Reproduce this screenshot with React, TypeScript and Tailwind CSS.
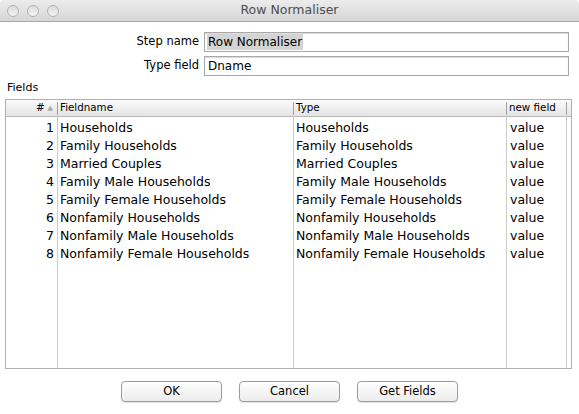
import React from "react";

const rows = [
  "Households",
  "Family Households",
  "Married Couples",
  "Family Male Households",
  "Family Female Households",
  "Nonfamily Households",
  "Nonfamily Male Households",
  "Nonfamily Female Households",
];

const TrafficLight = () => (
  <span className="w-[12px] h-[12px] rounded-full border border-[#b0b0b0] bg-gradient-to-b from-[#dcdcdc] to-[#f4f4f4]" />
);

const Button = ({ label }: { label: string }) => (
  <button className="w-[101px] h-[21px] rounded-[4px] border border-[#9c9c9c] bg-gradient-to-b from-white to-[#ececec] text-[11.5px] leading-none text-black shadow-[0_1px_1px_rgba(0,0,0,0.12)]">
    {label}
  </button>
);

export default function App() {
  return (
    <div className="w-[579px] h-[414px] bg-white overflow-hidden flex flex-col font-['DejaVu_Sans',sans-serif] text-black">
      {/* title bar */}
      <div className="relative h-[22px] shrink-0 flex items-center border-b border-[#a9a9a9] bg-gradient-to-b from-[#ececec] to-[#d6d6d6] rounded-t-[4px]">
        <div className="flex gap-[8px] pl-[7px]">
          <TrafficLight />
          <TrafficLight />
          <TrafficLight />
        </div>
        <div className="absolute inset-0 flex items-center justify-center text-[12.5px] text-[#4d4d4d]">
          Row Normaliser
        </div>
      </div>

      {/* form */}
      <div className="mt-[10px] flex flex-col gap-[4px]">
        <div className="flex items-center h-[20px]">
          <div className="w-[199px] text-right text-[11.5px]">Step name</div>
          <div className="ml-[5px] w-[365px] h-[20px] border border-[#a8a8a8] shadow-[inset_0_1px_1px_rgba(0,0,0,0.15)] flex items-center pl-[2px] text-[12px]">
            <span className="bg-[#d4d4d4] px-[1px] leading-[16px]">Row Normaliser</span>
          </div>
        </div>
        <div className="flex items-center h-[20px]">
          <div className="w-[199px] text-right text-[11.5px]">Type field</div>
          <div className="ml-[5px] w-[365px] h-[20px] border border-[#a8a8a8] shadow-[inset_0_1px_1px_rgba(0,0,0,0.15)] flex items-center pl-[3px] text-[12px]">
            Dname
          </div>
        </div>
      </div>

      <div className="mt-[5px] h-[14px] leading-[14px] pl-[7px] text-[11px]">Fields</div>

      {/* table */}
      <div className="mt-[4px] ml-[5px] w-[567px] h-[270px] border border-[#b0b0b0] flex flex-col">
        <div className="h-[17px] shrink-0 flex items-center border-b border-[#b8b8b8] bg-gradient-to-b from-[#fbfbfb] to-[#e4e4e4] text-[10.3px]">
          <div className="w-[52px] h-[13px] border-r border-[#a0a0a0] flex items-center justify-end pr-[4px] gap-[3px]">
            <span>#</span>
            <span className="text-[7px] text-[#a8a8a8]">▲</span>
          </div>
          <div className="w-[236px] h-[13px] border-r border-[#a0a0a0] flex items-center pl-[2px]">Fieldname</div>
          <div className="w-[213px] h-[13px] border-r border-[#a0a0a0] flex items-center pl-[2px]">Type</div>
          <div className="w-[60px] h-[13px] border-r border-[#a0a0a0] flex items-center pl-[2px]">new field</div>
        </div>
        <div className="flex-1 flex text-[12.5px]">
          <div className="w-[52px] border-r border-[#cdcdcd] pt-[2px]">
            {rows.map((_, i) => (
              <div key={i} className="h-[18px] leading-[18px] text-right pr-[3px]">
                {i + 1}
              </div>
            ))}
          </div>
          <div className="w-[236px] border-r border-[#cdcdcd] pt-[2px]">
            {rows.map((r) => (
              <div key={r} className="h-[18px] leading-[18px] pl-[2px] whitespace-nowrap">
                {r}
              </div>
            ))}
          </div>
          <div className="w-[213px] border-r border-[#cdcdcd] pt-[2px]">
            {rows.map((r) => (
              <div key={r} className="h-[18px] leading-[18px] pl-[2px] whitespace-nowrap">
                {r}
              </div>
            ))}
          </div>
          <div className="w-[60px] border-r border-[#cdcdcd] pt-[2px]">
            {rows.map((r) => (
              <div key={r} className="h-[18px] leading-[18px] pl-[3px]">
                value
              </div>
            ))}
          </div>
        </div>
      </div>

      {/* buttons */}
      <div className="mt-[12px] flex justify-center gap-[17px]">
        <Button label="OK" />
        <Button label="Cancel" />
        <Button label="Get Fields" />
      </div>
    </div>
  );
}
